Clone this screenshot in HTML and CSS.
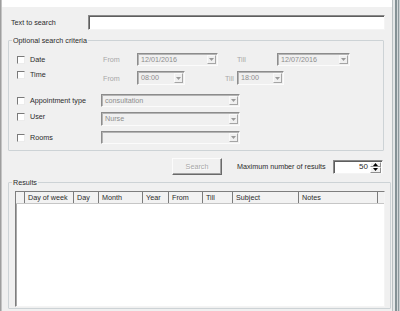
FILE: index.html
```html
<!DOCTYPE html>
<html>
<head>
    <title>Search appointments</title>
    <meta charset="UTF-8">
    <link rel="stylesheet" href="styles.css">
</head>
<body>
<div class="window">
    <div class="edge-left"></div>
    <div class="client">
        <div class="top-strip"></div>
        <div class="dialog">
            <div class="search-row">
                <label class="search-label" for="text">Text to search</label>
                <input class="text-input" type="text" id="text">
            </div>

            <fieldset class="group criteria">
                <legend>Optional search criteria</legend>

                <div class="row row-date">
                    <label class="cb-cell"><input type="checkbox" class="check"><span>Date</span></label>
                    <span class="dim-label from-label">From</span>
                    <div class="combo date-from">
                        <span class="combo-text">12/01/2016</span>
                        <span class="combo-btn"><svg width="5" height="3" viewBox="0 0 5 3"><path d="M0 0h5L2.5 3z" fill="#9a9a9a"/></svg></span>
                    </div>
                    <span class="dim-label till-label">Till</span>
                    <div class="combo date-till">
                        <span class="combo-text">12/07/2016</span>
                        <span class="combo-btn"><svg width="5" height="3" viewBox="0 0 5 3"><path d="M0 0h5L2.5 3z" fill="#9a9a9a"/></svg></span>
                    </div>
                </div>

                <div class="row row-time">
                    <label class="cb-cell lift"><input type="checkbox" class="check"><span>Time</span></label>
                    <span class="dim-label from-label">From</span>
                    <div class="combo time-from">
                        <span class="combo-text">08:00</span>
                        <span class="combo-btn"><svg width="5" height="3" viewBox="0 0 5 3"><path d="M0 0h5L2.5 3z" fill="#9a9a9a"/></svg></span>
                    </div>
                    <span class="dim-label time-till-label">Till</span>
                    <div class="combo time-till">
                        <span class="combo-text">18:00</span>
                        <span class="combo-btn"><svg width="5" height="3" viewBox="0 0 5 3"><path d="M0 0h5L2.5 3z" fill="#9a9a9a"/></svg></span>
                    </div>
                </div>

                <div class="row row-appt">
                    <label class="cb-cell"><input type="checkbox" class="check"><span>Appointment type</span></label>
                    <div class="combo wide">
                        <span class="combo-text">consultation</span>
                        <span class="combo-btn"><svg width="5" height="3" viewBox="0 0 5 3"><path d="M0 0h5L2.5 3z" fill="#9a9a9a"/></svg></span>
                    </div>
                </div>

                <div class="row row-user">
                    <label class="cb-cell lift-small"><input type="checkbox" class="check"><span>User</span></label>
                    <div class="combo wide">
                        <span class="combo-text">Nurse</span>
                        <span class="combo-btn"><svg width="5" height="3" viewBox="0 0 5 3"><path d="M0 0h5L2.5 3z" fill="#9a9a9a"/></svg></span>
                    </div>
                </div>

                <div class="row row-rooms">
                    <label class="cb-cell"><input type="checkbox" class="check"><span>Rooms</span></label>
                    <div class="combo wide">
                        <span class="combo-text"></span>
                        <span class="combo-btn"><svg width="5" height="3" viewBox="0 0 5 3"><path d="M0 0h5L2.5 3z" fill="#9a9a9a"/></svg></span>
                    </div>
                </div>
            </fieldset>

            <div class="action-row">
                <button class="btn" disabled>Search</button>
                <span class="max-label">Maximum number of results</span>
                <div class="spin">
                    <span class="spin-value">50</span>
                    <span class="spin-btns">
                        <span class="spin-up"><svg width="5" height="3" viewBox="0 0 5 3"><path d="M2.5 0L5 3H0z" fill="#000"/></svg></span>
                        <span class="spin-down"><svg width="5" height="3" viewBox="0 0 5 3"><path d="M0 0h5L2.5 3z" fill="#000"/></svg></span>
                    </span>
                </div>
            </div>

            <fieldset class="group results">
                <legend>Results</legend>
                <div class="listview">
                    <div class="lv-head">
                        <span class="col c0"></span>
                        <span class="col c1">Day of week</span>
                        <span class="col c2">Day</span>
                        <span class="col c3">Month</span>
                        <span class="col c4">Year</span>
                        <span class="col c5">From</span>
                        <span class="col c6">Till</span>
                        <span class="col c7">Subject</span>
                        <span class="col c8">Notes</span>
                    </div>
                </div>
            </fieldset>
        </div>
    </div>
    <div class="edge-right"></div>
</div>
</body>
</html>
```

FILE: styles.css
```css
body {
    margin: 0;
    font-family: "Liberation Sans", Arial, sans-serif;
    font-size: 7.2px;
    line-height: 8px;
    color: #2b2b2b;
    background: #f0f0f0;
}
.window {
    display: flex;
    width: 400px;
    height: 311px;
    overflow: hidden;
}
.edge-left {
    width: 2px;
    background: linear-gradient(to right, #9e9e9e 0 1px, #c4c4c4 1px 2px);
}
.edge-right {
    width: 8px;
    background: linear-gradient(to right, #b9c0c2 0 1px, #e4e7e8 1px 3px, #849195 3px 5px, #d3d8da 5px 6px, #8f9a9e 6px 7px, #c9cfd1 7px);
}
.client {
    width: 390px;
    display: flex;
    flex-direction: column;
}
.top-strip {
    height: 7px;
    background: #fff;
}
.dialog {
    flex: 1;
    background: #f0f0f0;
}
.search-row {
    display: flex;
    align-items: center;
    padding: 8px 0 0 9px;
}
.search-label {
    width: 77px;
}
.text-input {
    width: 297px;
    height: 15px;
    margin: 0;
    padding: 0;
    box-sizing: border-box;
    border: 1px solid;
    border-color: #8a8a8a #f4f4f4 #f4f4f4 #8a8a8a;
    box-shadow: inset 1px 1px #5e5e5e;
    background: #fff;
}
.group {
    margin: 0 0 0 6px;
    padding: 0;
    min-width: 0;
    box-sizing: border-box;
    border: 1px solid #cdd3d6;
    border-radius: 1px;
}
.group legend {
    margin-left: 3px;
    padding: 0 1px;
    line-height: 9px;
}
.criteria {
    width: 376px;
    margin-top: 6px;
    padding-bottom: 6px;
}
.row {
    display: flex;
    align-items: center;
    margin-top: 5px;
}
.row-date {
    margin-top: 8px;
    height: 13px;
}
.row-time {
    height: 14px;
}
.row-appt {
    margin-top: 9px;
    height: 13px;
}
.row-user {
    height: 14px;
}
.row-rooms {
    height: 13px;
}
.cb-cell {
    display: flex;
    align-items: center;
    gap: 5px;
    width: 92px;
    padding-left: 8px;
    box-sizing: border-box;
}
.cb-cell.lift {
    margin-bottom: 6px;
}
.cb-cell.lift-small {
    margin-bottom: 5px;
}
.check {
    -webkit-appearance: none;
    appearance: none;
    width: 8px;
    height: 8px;
    margin: 0;
    box-sizing: border-box;
    border: 1px solid;
    border-color: #7a7a7a #ececec #ececec #7a7a7a;
    background: #fff;
}
.dim-label {
    color: #a8a8a8;
}
.from-label {
    margin-left: 2px;
    width: 34px;
}
.till-label {
    margin-left: 19px;
    width: 40px;
}
.row-time .dim-label {
    margin-top: 1px;
}
.time-till-label {
    margin-left: 40px;
    width: 12px;
}
.combo {
    display: flex;
    height: 100%;
    box-sizing: border-box;
    border: 1px solid;
    border-color: #8c8c8c #fbfbfb #fbfbfb #8c8c8c;
    box-shadow: inset 1px 1px #b4b4b4;
    background: #f0f0f0;
}
.combo-text {
    flex: 1;
    padding: 1px 0 0 3px;
    color: #8e8e8e;
    line-height: 10px;
}
.combo-btn {
    width: 9px;
    margin: 1px;
    display: flex;
    align-items: center;
    justify-content: center;
    border: 1px solid;
    border-color: #fafafa #a5a5a5 #a5a5a5 #fafafa;
    box-sizing: border-box;
}
.date-from { width: 81px; }
.date-till { width: 73px; }
.time-from { width: 48px; }
.time-till { width: 47px; }
.combo.wide { width: 139px; }
.action-row {
    display: flex;
    align-items: center;
    justify-content: flex-end;
    height: 17px;
    margin-top: 7px;
    padding-right: 9px;
}
.btn {
    width: 50px;
    height: 17px;
    margin: 0 15px 0 0;
    padding: 0;
    font: inherit;
    color: #a7a7a7;
    text-shadow: 1px 1px #fff;
    background: #f0f0f0;
    border: 1px solid;
    border-color: #fbfbfb #6a6a6a #6a6a6a #fbfbfb;
    box-shadow: inset -1px -1px #a3a3a3;
}
.max-label {
    width: 96px;
}
.spin {
    display: flex;
    width: 50px;
    height: 14px;
    box-sizing: border-box;
    border: 1px solid;
    border-color: #8a8a8a #f4f4f4 #f4f4f4 #8a8a8a;
    box-shadow: inset 1px 1px #5e5e5e;
    background: #fff;
}
.spin-value {
    flex: 1;
    text-align: right;
    padding: 2px 2px 0 0;
    font-size: 8px;
}
.spin-btns {
    width: 11px;
    margin: 1px 1px 0 0;
    display: flex;
    flex-direction: column;
    background: #f0f0f0;
}
.spin-up, .spin-down {
    flex: 1;
    display: flex;
    align-items: center;
    justify-content: center;
    border: 1px solid;
    border-color: #fff #8e8e8e #8e8e8e #fff;
}
.results {
    width: 383px;
    margin-top: 3px;
    padding-bottom: 1px;
}
.listview {
    width: 370px;
    height: 116px;
    margin: 4px 0 0 6px;
    box-sizing: border-box;
    border: 1px solid;
    border-color: #7e7e7e #f4f4f4 #f4f4f4 #7e7e7e;
    box-shadow: inset 1px 1px #a8a8a8;
    background: #fff;
}
.lv-head {
    display: flex;
    height: 11px;
    background: #f2f2f2;
    border-bottom: 1px solid #c6c6c6;
}
.col {
    box-sizing: border-box;
    padding: 2px 0 0 3px;
    border-right: 1px solid #7b7b7b;
    white-space: nowrap;
    overflow: hidden;
}
.c0 { width: 9px; padding: 0; }
.c1 { width: 49px; }
.c2 { width: 25px; }
.c3 { width: 44px; }
.c4 { width: 26px; }
.c5 { width: 34px; }
.c6 { width: 30px; }
.c7 { width: 66px; }
.c8 { width: 79px; }
```
